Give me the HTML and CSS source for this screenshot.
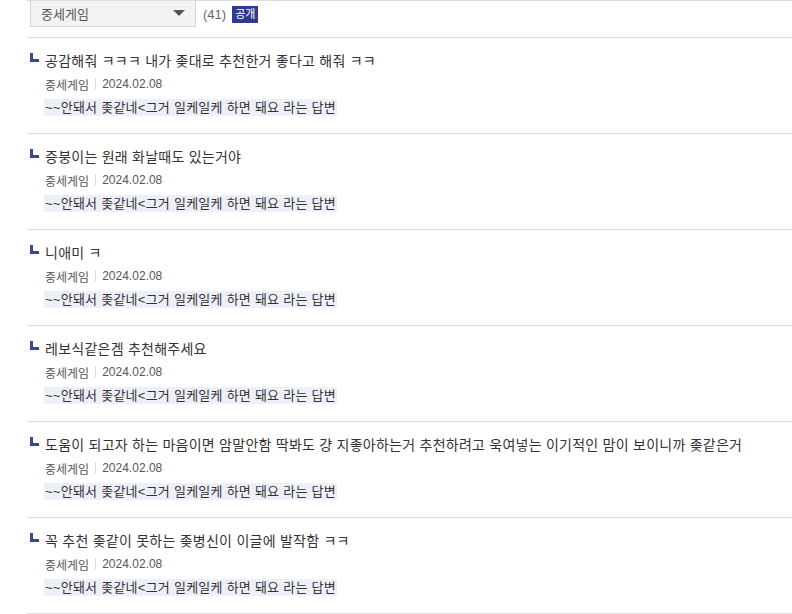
FILE: index.html
```html
<!DOCTYPE html>
<html lang="ko">
<head>
    <meta charset="UTF-8">
    <meta name="viewport" content="width=device-width, initial-scale=1.0">
    <title>댓글 목록</title>
    <link rel="stylesheet" href="styles.css">
</head>
<body>
    <div class="board">
        <div class="head">
            <div class="select">
                <span>중세게임</span>
                <span class="arrow"></span>
            </div>
            <span class="count">(41)</span>
            <span class="badge">공개</span>
        </div>
        <ul class="list">
            <li class="item">
                <div class="title"><span class="reply"></span>공감해줘 ㅋㅋㅋ 내가 좆대로 추천한거 좋다고 해줘 ㅋㅋ</div>
                <div class="meta">중세게임<span class="bar"></span>2024.02.08</div>
                <div class="quote"><span>~~안돼서 좆같네&lt;그거 일케일케 하면 돼요 라는 답변</span></div>
            </li>
            <li class="item">
                <div class="title"><span class="reply"></span>증붕이는 원래 화날때도 있는거야</div>
                <div class="meta">중세게임<span class="bar"></span>2024.02.08</div>
                <div class="quote"><span>~~안돼서 좆같네&lt;그거 일케일케 하면 돼요 라는 답변</span></div>
            </li>
            <li class="item">
                <div class="title"><span class="reply"></span>니애미 ㅋ</div>
                <div class="meta">중세게임<span class="bar"></span>2024.02.08</div>
                <div class="quote"><span>~~안돼서 좆같네&lt;그거 일케일케 하면 돼요 라는 답변</span></div>
            </li>
            <li class="item">
                <div class="title"><span class="reply"></span>레보식같은겜 추천해주세요</div>
                <div class="meta">중세게임<span class="bar"></span>2024.02.08</div>
                <div class="quote"><span>~~안돼서 좆같네&lt;그거 일케일케 하면 돼요 라는 답변</span></div>
            </li>
            <li class="item">
                <div class="title"><span class="reply"></span>도움이 되고자 하는 마음이면 암말안함 딱봐도 걍 지좋아하는거 추천하려고 욱여넣는 이기적인 맘이 보이니까 좆같은거</div>
                <div class="meta">중세게임<span class="bar"></span>2024.02.08</div>
                <div class="quote"><span>~~안돼서 좆같네&lt;그거 일케일케 하면 돼요 라는 답변</span></div>
            </li>
            <li class="item">
                <div class="title"><span class="reply"></span>꼭 추천 좆같이 못하는 좆병신이 이글에 발작함 ㅋㅋ</div>
                <div class="meta">중세게임<span class="bar"></span>2024.02.08</div>
                <div class="quote"><span>~~안돼서 좆같네&lt;그거 일케일케 하면 돼요 라는 답변</span></div>
            </li>
        </ul>
    </div>
</body>
</html>
```

FILE: styles.css
```css
body{
    margin:0;
    padding:0;
    background:#fff;
    font-family:"Liberation Sans","Noto Sans CJK KR",sans-serif;
    color:#333;
}
.board{
    margin-left:27px;
    border-top:1px solid #ddd;
}
.head{
    display:flex;
    align-items:center;
    height:36px;
    padding-left:3px;
    border-bottom:1px solid #ddd;
}
.head .select{
    display:flex;
    align-items:center;
    justify-content:space-between;
    box-sizing:border-box;
    width:166px;
    height:26px;
    margin-top:-11px;
    padding:0 10px 0 10px;
    background:#f3f3f3;
    border:1px solid #d5d5d5;
    border-top:none;
    font-size:13px;
    color:#555;
}
.head .arrow{
    width:0;
    height:0;
    border-left:6px solid transparent;
    border-right:6px solid transparent;
    border-top:6px solid #555;
}
.head .count{
    margin-left:7px;
    font-size:13px;
    color:#666;
    margin-top:-9px;
}
.head .badge{
    margin-left:6px;
    margin-top:-9px;
    padding:1px 3px;
    background:#2e3b8e;
    color:#fff;
    font-size:11px;
    line-height:15px;
}
.list{
    list-style:none;
    margin:0;
    padding:0;
}
.item{
    padding:10px 0 13px 3px;
    border-bottom:1px solid #ddd;
}
.item .title{
    display:flex;
    align-items:center;
    height:24px;
    font-size:14px;
    letter-spacing:0.25px;
    white-space:nowrap;
}
.item .reply{
    flex:none;
    width:9px;
    height:9px;
    margin:-5px 6px 0 0;
    border-left:3px solid #3a4796;
    border-bottom:3px solid #3a4796;
    box-sizing:border-box;
}
.item .meta{
    display:flex;
    align-items:center;
    height:24px;
    padding-left:15px;
    font-size:12px;
    color:#555;
}
.item .bar{
    width:1px;
    height:12px;
    margin:0 6px;
    background:#ddd;
}
.item .quote{
    height:24px;
    line-height:24px;
    padding-left:14px;
    font-size:13px;
    letter-spacing:0.25px;
}
.item .quote span{
    background:#edf0fb;
    padding:1px 1px;
}
```
